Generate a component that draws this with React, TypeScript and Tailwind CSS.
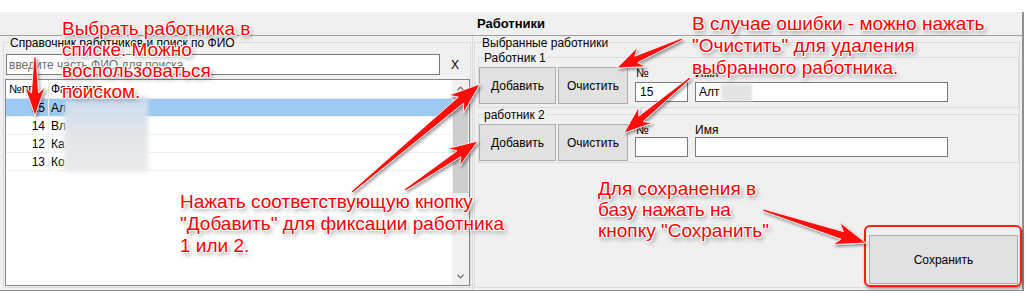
import React from "react";
import { ChevronDown, ChevronUp } from "lucide-react";

type Pt = [number, number];

// tapered "skitch" style arrow: thin tail, wide head
function arrowPoints(from: Pt, to: Pt, head = 22, headLen = 26, neck = 7, tail = 2) {
  const [x1, y1] = from;
  const [x2, y2] = to;
  const len = Math.hypot(x2 - x1, y2 - y1);
  const ux = (x2 - x1) / len;
  const uy = (y2 - y1) / len;
  const nx = -uy;
  const ny = ux;
  const bx = x2 - ux * headLen;
  const by = y2 - uy * headLen;
  const pts: Pt[] = [
    [x1 + (nx * tail) / 2, y1 + (ny * tail) / 2],
    [bx + ux * 4 + (nx * neck) / 2, by + uy * 4 + (ny * neck) / 2],
    [bx - ux * 2 + (nx * head) / 2, by - uy * 2 + (ny * head) / 2],
    [x2, y2],
    [bx - ux * 2 - (nx * head) / 2, by - uy * 2 - (ny * head) / 2],
    [bx + ux * 4 - (nx * neck) / 2, by + uy * 4 - (ny * neck) / 2],
    [x1 - (nx * tail) / 2, y1 - (ny * tail) / 2],
  ];
  return pts.map((p) => p.map((v) => v.toFixed(1)).join(",")).join(" ");
}

const arrows: { from: Pt; to: Pt; head?: number; headLen?: number; neck?: number }[] = [
  { from: [35, 57], to: [35, 116], head: 20, headLen: 27, neck: 7 },
  { from: [682, 39], to: [617, 68], head: 21, headLen: 25, neck: 7 },
  { from: [690, 78], to: [624, 133], head: 21, headLen: 26, neck: 7 },
  { from: [352, 192], to: [480, 84], head: 23, headLen: 29, neck: 8 },
  { from: [405, 190], to: [478, 141], head: 21, headLen: 27, neck: 7 },
  { from: [763, 210], to: [866, 243], head: 23, headLen: 29, neck: 8 },
];

const note =
  "absolute whitespace-nowrap text-[19px] text-[#ff0000] font-['Liberation_Sans',Arial,sans-serif] [text-shadow:-1px_-1px_0_#fff,1px_-1px_0_#fff,-1px_1px_0_#fff,1px_1px_0_#fff,0_0_2px_#fff,2px_3px_4px_rgba(0,0,0,0.45)]";

const btn =
  "h-[37px] bg-[#e1e1e1] border border-[#adadad] flex items-center justify-center text-[12px] text-black";

const rows = [
  { n: "15", name: "Ал", sel: true },
  { n: "14", name: "Вл" },
  { n: "12", name: "Ка" },
  { n: "13", name: "Ко" },
];

function Worker({ label, num, name, first }: { label: string; num: string; name: string; first?: boolean }) {
  return (
    <div className={`ml-[3px] w-[541px] border border-[#dcdcdc] flex flex-col ${first ? "mt-[7px] h-[51px]" : "mt-[6px] h-[49px]"}`}>
      <span className="-mt-[7px] ml-[4px] px-[1px] w-fit bg-[#f0f0f0] leading-[14px]">{label}</span>
      <div className="mt-[2px] flex">
        <div className={`${btn} w-[77px]`}>Добавить</div>
        <div className={`${btn} w-[70px] ml-[2px]`}>Очистить</div>
        <div className="ml-[7px] w-[53px] flex flex-col">
          <span className="leading-[13px] pl-[1px]">№</span>
          <div className={`h-[20px] bg-white border border-[#7a7a7a] flex items-center pl-[4px] ${first ? "mt-[2px]" : ""}`}>{num}</div>
        </div>
        <div className="ml-[7px] w-[253px] flex flex-col">
          <span className="leading-[13px]">Имя</span>
          <div className={`h-[20px] bg-white border border-[#7a7a7a] flex items-center pl-[3px] ${first ? "mt-[2px]" : ""}`}>{name}</div>
        </div>
      </div>
    </div>
  );
}

export default function App() {
  return (
    <div className="relative w-[1026px] h-[293px] bg-white overflow-hidden font-['Liberation_Sans',Arial,sans-serif] text-[12px] text-black">
      <div className="h-[12px]" />
      <div className="w-[1024px] h-[279px] bg-[#f0f0f0] border-r-2 border-b border-[#8f8f8f] flex flex-col">
        <div className="h-[24px] shrink-0 border-b border-[#a0a0a0] flex items-center justify-center font-bold text-[13px]">
          Работники
        </div>
        <div className="flex flex-1">
          {/* left: employee list */}
          <div className="w-[473px] pl-[3px] pt-[6px] border-r border-[#dadada]">
            <div className="w-[468px] h-[246px] border border-[#dcdcdc] flex flex-col">
              <span className="-mt-[7px] ml-[5px] px-[1px] w-fit bg-[#f0f0f0] leading-[14px]">
                Справочник работников и поиск по ФИО
              </span>
              <div className="mt-[4px] flex items-center">
                <div className="ml-[2px] w-[434px] h-[21px] bg-white border border-[#7a7a7a] flex items-center pl-[2px] text-[#6d6d6d]">
                  введите часть ФИО для поиска
                </div>
                <span className="flex-1 text-center">X</span>
              </div>
              <div className="mt-[4px] ml-[1px] w-[465px] h-[207px] bg-white border border-[#828790] flex">
                <div className="flex-1 flex flex-col">
                  <div className="h-[19px] border-b border-[#e5e5e5] flex">
                    <div className="w-[43px] border-r border-[#e5e5e5] pl-[3px] leading-[18px] overflow-hidden">№пп</div>
                    <div className="pl-[2px] leading-[18px]">Фамилия</div>
                  </div>
                  {rows.map((r) => (
                    <div key={r.n} className={`h-[18px] flex border-b border-[#f0f0f0] ${r.sel ? "bg-[#9ccaf2]" : ""}`}>
                      <div className="w-[43px] pr-[3px] text-right leading-[18px] border-r border-[#f0f0f0]">{r.n}</div>
                      <div className="pl-[2px] leading-[18px]">{r.name}</div>
                    </div>
                  ))}
                </div>
                <div className="w-[17px] bg-[#f0f0f0] flex flex-col">
                  <div className="h-[17px] flex items-center justify-center text-[#606060]">
                    <ChevronUp size={11} strokeWidth={2.5} />
                  </div>
                  <div className="mx-[1px] h-[96px] bg-[#cdcdcd]" />
                  <div className="flex-1" />
                  <div className="h-[17px] flex items-center justify-center text-[#606060]">
                    <ChevronDown size={11} strokeWidth={2.5} />
                  </div>
                </div>
              </div>
            </div>
          </div>
          {/* right: chosen employees */}
          <div className="pt-[6px]">
            <div className="ml-[1px] w-[546px] h-[246px] border border-[#dcdcdc] flex flex-col">
              <span className="-mt-[7px] ml-[6px] px-[1px] w-fit bg-[#f0f0f0] leading-[14px]">Выбранные работники</span>
              <Worker label="Работник 1" num="15" name="Алт" first />
              <Worker label="работник 2" num="" name="" />
              <div className="mt-auto mb-[3px] mr-[1px] self-end w-[149px] h-[49px] bg-[#e1e1e1] border border-[#adadad] flex items-center justify-center">
                Сохранить
              </div>
            </div>
          </div>
        </div>
      </div>

      {/* redacted names */}
      <div className="absolute left-[64px] top-[97px] w-[84px] h-[75px] bg-linear-to-b from-[#c9ddef] via-[#e2e5e8] to-[#ebebeb] blur-[2px]" />
      <div className="absolute left-[721px] top-[84px] w-[31px] h-[17px] bg-[#e4e4e4] blur-[1px]" />

      {/* annotations */}
      <div className="absolute left-[864px] top-[225px] w-[158px] h-[62px] rounded-[6px] border-2 border-[#ff1a1a] shadow-[1px_2px_3px_rgba(0,0,0,0.35)]" />
      <svg className="absolute left-0 top-0 pointer-events-none" width="1026" height="293">
        <defs>
          <filter id="sh" x="-20%" y="-20%" width="140%" height="140%">
            <feDropShadow dx="1.5" dy="2" stdDeviation="1.5" floodColor="#000" floodOpacity="0.4" />
          </filter>
        </defs>
        {arrows.map((a, i) => (
          <polygon
            key={i}
            points={arrowPoints(a.from, a.to, a.head, a.headLen, a.neck)}
            fill="#ff1010"
            stroke="#fff"
            strokeWidth="0.8"
            strokeLinejoin="round"
            filter="url(#sh)"
          />
        ))}
      </svg>

      <div className={`${note} left-[62px] top-[18px] leading-[21px]`}>
        Выбрать работника в<br />списке. Можно<br />воспользоваться<br />поиском.
      </div>
      <div className={`${note} left-[692px] top-[13px] leading-[22px]`}>
        В случае ошибки - можно нажать<br />"Очистить" для удаления<br />выбранного работника.
      </div>
      <div className={`${note} left-[180px] top-[191px] leading-[22px]`}>
        Нажать соответствующую кнопку<br />"Добавить" для фиксации работника<br />1 или 2.
      </div>
      <div className={`${note} left-[598px] top-[178px] leading-[21px]`}>
        Для сохранения в<br />базу нажать на<br />кнопку "Сохранить"
      </div>
    </div>
  );
}
